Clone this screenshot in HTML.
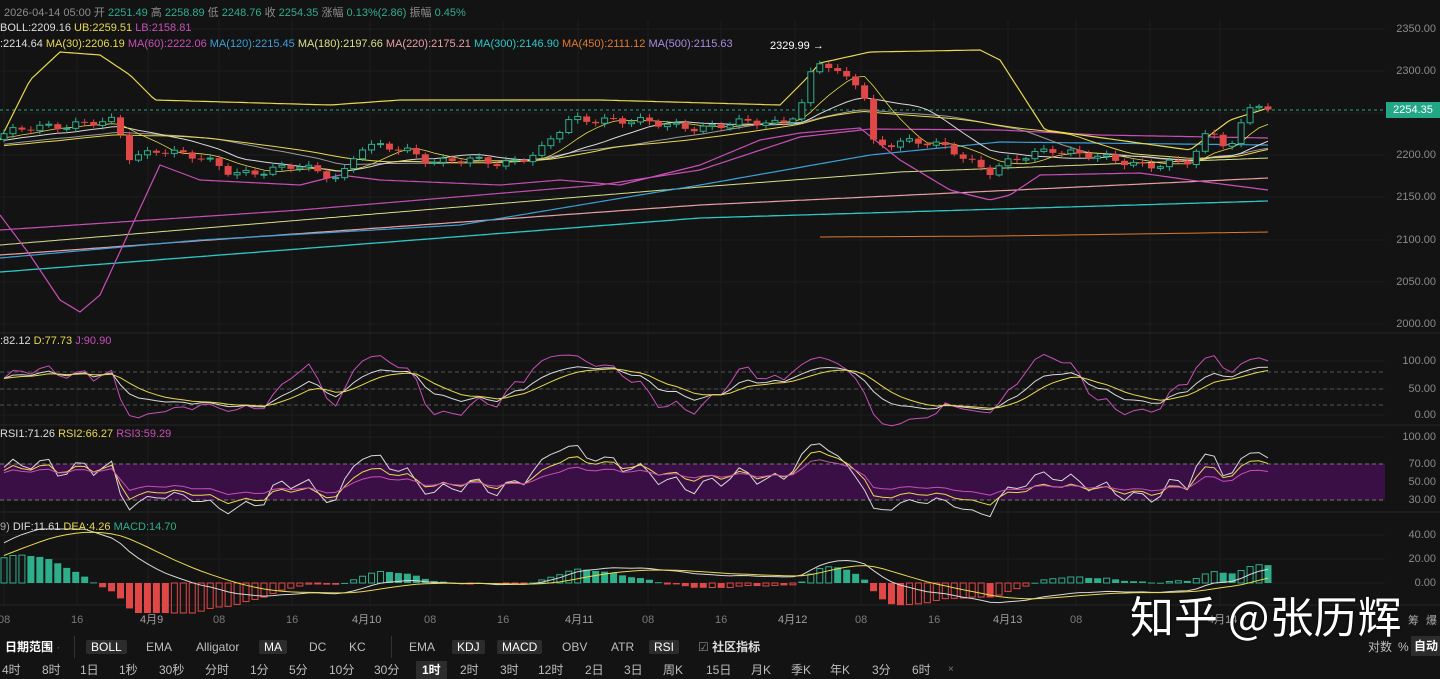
<!DOCTYPE html>
<html><head><meta charset="utf-8">
<style>
*{margin:0;padding:0;box-sizing:border-box}
body{width:1440px;height:679px;background:#131313;overflow:hidden;font-family:"Liberation Sans","Noto Sans CJK SC",sans-serif;color:#ccc;position:relative}
.t{position:absolute;font-size:11px;white-space:nowrap;line-height:13px}
.ax{position:absolute;font-size:11px;color:#8a8a8a;right:4px;text-align:right;line-height:12px}
.tb{position:absolute;font-size:12px;color:#bdbdbd;white-space:nowrap;line-height:18px}
.chip{background:#2c2c2c;color:#fff;border-radius:2px;padding:0 5px}
svg{position:absolute;left:0;top:0}
</style></head><body>
<svg id="s" width="1440" height="679"></svg>

<div class="t" style="left:4px;top:7px;color:#8d8d8d">2026-04-14 05:00 开 <span style="color:#2fae8c">2251.49</span> 高 <span style="color:#2fae8c">2258.89</span> 低 <span style="color:#2fae8c">2248.76</span> 收 <span style="color:#2fae8c">2254.35</span> 涨幅 <span style="color:#2fae8c">0.13%(2.86)</span> 振幅 <span style="color:#2fae8c">0.45%</span></div>
<div class="t" style="left:0;top:22px;color:#ddd">BOLL:2209.16 <span style="color:#e9d94f">UB:2259.51</span> <span style="color:#c84fb8">LB:2158.81</span></div>
<div class="t" style="left:0;top:38px;color:#ddd">:2214.64 <span style="color:#e9d94f">MA(30):2206.19</span> <span style="color:#c84fb8">MA(60):2222.06</span> <span style="color:#3d9fd6">MA(120):2215.45</span> <span style="color:#d9e08a">MA(180):2197.66</span> <span style="color:#e8a0a6">MA(220):2175.21</span> <span style="color:#2cc8c8">MA(300):2146.90</span> <span style="color:#e07a30">MA(450):2111.12</span> <span style="color:#a58ce0">MA(500):2115.63</span></div>
<div class="t" style="left:770px;top:40px;color:#fff">2329.99 →</div>

<div class="t" style="left:0;top:335px;color:#ddd">:82.12 <span style="color:#e9d94f">D:77.73</span> <span style="color:#c84fb8">J:90.90</span></div>
<div class="t" style="left:0;top:428px;color:#ddd">RSI1:71.26 <span style="color:#e9d94f">RSI2:66.27</span> <span style="color:#c84fb8">RSI3:59.29</span></div>
<div class="t" style="left:0;top:521px;color:#aaa">9) <span style="color:#ddd">DIF:11.61</span> <span style="color:#e9d94f">DEA:4.26</span> <span style="color:#2fae8c">MACD:14.70</span></div>

<div class="ax" style="top:23px">2350.00</div><div class="ax" style="top:65px">2300.00</div>
<div class="ax" style="top:149px">2200.00</div><div class="ax" style="top:191px">2150.00</div>
<div class="ax" style="top:234px">2100.00</div><div class="ax" style="top:276px">2050.00</div>
<div class="ax" style="top:318px">2000.00</div>
<div style="position:absolute;left:1386px;top:102px;width:54px;height:16px;background:#23a887;color:#fff;font-size:11px;line-height:16px;text-align:center">2254.35</div>
<div class="ax" style="top:355px">100.00</div><div class="ax" style="top:383px">50.00</div><div class="ax" style="top:409px">0.00</div>
<div class="ax" style="top:431px">100.00</div><div class="ax" style="top:458px">70.00</div><div class="ax" style="top:476px">50.00</div><div class="ax" style="top:494px">30.00</div>
<div class="ax" style="top:529px">40.00</div><div class="ax" style="top:553px">20.00</div><div class="ax" style="top:577px">0.00</div>

<div id="tl"></div>
<div class="t" style="left:1408px;top:615px;color:#aaa">筹</div><div class="t" style="left:1426px;top:615px;color:#aaa">爆</div>
<div style="position:absolute;left:1130px;top:588px;font-size:44px;color:#fff;line-height:52px;font-family:'Noto Sans CJK SC',sans-serif;white-space:nowrap;text-shadow:0 0 2px #000">知乎 @张历辉</div>

<div class="tb" style="left:5px;top:638px;color:#fff;font-weight:bold">日期范围 <span style="color:#666;font-weight:normal">·</span></div>
<div style="position:absolute;left:74px;top:636px;width:1px;height:22px;background:#333"></div>
<div style="position:absolute;left:391px;top:636px;width:1px;height:22px;background:#333"></div>
<div class="tb" style="left:86px;top:638px"><span class="chip">BOLL</span></div>
<div class="tb" style="left:146px;top:638px">EMA</div>
<div class="tb" style="left:196px;top:638px">Alligator</div>
<div class="tb" style="left:259px;top:638px"><span class="chip">MA</span></div>
<div class="tb" style="left:309px;top:638px">DC</div>
<div class="tb" style="left:349px;top:638px">KC</div>
<div class="tb" style="left:409px;top:638px">EMA</div>
<div class="tb" style="left:452px;top:638px"><span class="chip">KDJ</span></div>
<div class="tb" style="left:497px;top:638px"><span class="chip">MACD</span></div>
<div class="tb" style="left:562px;top:638px">OBV</div>
<div class="tb" style="left:611px;top:638px">ATR</div>
<div class="tb" style="left:649px;top:638px"><span class="chip">RSI</span></div>
<div class="tb" style="left:698px;top:638px;color:#ddd"><span style="color:#888">☑</span> <b>社区指标</b></div>
<div class="tb" style="left:1368px;top:638px">对数</div>
<div class="tb" style="left:1398px;top:638px">%</div>
<div class="tb" style="left:1411px;top:636px;background:#2c2c2c;color:#fff;padding:1px 3px;font-weight:bold">自动</div>

<div id="row2"></div>

<script>
const S=document.getElementById('s');let svg='';
const vx=[4,77,148,219,292,370,430,503,578,648,721,795,861,934,1008,1076,1150,1220];
vx.forEach(x=>svg+=`<line x1="${x}" y1="20" x2="${x}" y2="605" stroke="#1e1e1e"/>`);
[29,71,113,155,197,240,282,324,361,389,415,437,464,482,500,535,559,583].forEach(y=>svg+=`<line x1="0" y1="${y}" x2="1385" y2="${y}" stroke="#1c1c1c"/>`);
[333,425,512,605].forEach(y=>svg+=`<line x1="0" y1="${y}" x2="1440" y2="${y}" stroke="#262626"/>`);
svg+=`<rect x="0" y="464" width="1385" height="36" fill="#3a0f45"/>`;
[372,389,405].forEach(y=>svg+=`<line x1="0" y1="${y}" x2="1385" y2="${y}" stroke="#555" stroke-dasharray="4,3"/>`);
[464,500].forEach(y=>svg+=`<line x1="0" y1="${y}" x2="1385" y2="${y}" stroke="#777" stroke-dasharray="4,3"/>`);
svg+=`<line x1="0" y1="110" x2="1385" y2="110" stroke="#23a887" stroke-dasharray="3,3"/>`;
function interp(k,x){if(x<=k[0][0])return k[0][1];for(let i=0;i<k.length-1;i++){if(x<=k[i+1][0]){const a=k[i],b=k[i+1];return a[1]+(b[1]-a[1])*(x-a[0])/(b[0]-a[0]);}}return k[k.length-1][1];}
const py=p=>29+(2350-p)*0.842;
function line(k,c,w){let pts=[];for(let x=k[0][0];x<=k[k.length-1][0];x+=4)pts.push(x+','+interp(k,x).toFixed(1));svg+=`<polyline points="${pts.join(' ')}" fill="none" stroke="${c}" stroke-width="${w||1}"/>`;}
line([[0,272],[700,218],[1268,201]],'#2cc8c8',1.3);
line([[0,255],[700,205],[1268,178]],'#e8a0a6',1.2);
line([[0,245],[700,187],[900,172],[1268,158]],'#d9e08a',1);
line([[0,258],[200,240],[460,225],[700,185],[870,155],[1000,142],[1268,145]],'#3d9fd6',1.2);
line([[820,237],[1000,236],[1268,232]],'#e07a30',1);
line([[0,230],[300,210],[600,185],[700,170],[800,137],[870,129],[1000,130],[1100,135],[1268,138]],'#c84fb8',1.2);
line([[0,140],[30,80],[60,52],[100,55],[130,75],[155,100],[330,105],[400,100],[600,100],[780,105],[805,80],[820,63],[870,52],[980,50],[1000,60],[1045,130],[1190,150],[1230,120],[1268,108]],'#e9d94f',1.2);
line([[0,215],[30,255],[60,300],[80,312],[100,295],[130,230],[160,165],[200,180],[300,185],[340,175],[380,180],[500,185],[560,180],[620,185],[700,165],[760,140],[800,133],[860,128],[900,160],[950,190],[990,200],[1010,195],[1040,175],[1140,173],[1190,180],[1268,190]],'#c84fb8',1.2);
const kf=[[-700,2180],[-250,2200],[-80,2215],[0,2225],[30,2230],[80,2240],[115,2238],[130,2195],[160,2210],[200,2195],[230,2180],[300,2185],[340,2175],[360,2210],[410,2205],[430,2195],[500,2190],[540,2205],[570,2240],[610,2245],[660,2235],[720,2235],[780,2240],[800,2255],[812,2300],[822,2312],[835,2295],[862,2285],[874,2215],[900,2215],[950,2210],[990,2180],[1020,2195],[1050,2210],[1100,2195],[1150,2190],[1190,2190],[1210,2230],[1230,2210],[1252,2265],[1268,2254]];
const N=142,dx=1264/141,pre=80;const C=[],X=[];
for(let i=-pre;i<N;i++){const x=4+i*dx;X.push(x);C.push(interp(kf,x)+4*Math.sin(i*1.7)+3*Math.sin(i*0.63));}
C[C.length-1]=2254.35;
const sma=(a,n)=>a.map((v,i)=>{let s=0,c=0;for(let j=Math.max(0,i-n+1);j<=i;j++){s+=a[j];c++;}return s/c;});
function pl(vals,f,c,w){let p=[];for(let i=pre;i<vals.length;i++)p.push(X[i].toFixed(1)+','+f(vals[i]).toFixed(1));svg+=`<polyline points="${p.join(' ')}" fill="none" stroke="${c}" stroke-width="${w||1}"/>`;}
pl(sma(C,25),py,'#9a9a9a');pl(sma(C,14),py,'#d8d8d8');pl(sma(C,30),py,'#e9d94f');pl(sma(C,7),py,'#e9d94f',0.8);
for(let i=pre;i<C.length;i++){const x=X[i],o=C[i-1],c=C[i];const h=Math.max(o,c)+2+3*Math.abs(Math.sin(i*2.3)),l=Math.min(o,c)-2-3*Math.abs(Math.cos(i*1.9));
const up=c>=o,col=up?'#2fae8c':'#e04848';
svg+=`<line x1="${x}" y1="${py(h)}" x2="${x}" y2="${py(l)}" stroke="${col}"/>`;
const yt=py(Math.max(o,c)),hh=Math.max(1,py(Math.min(o,c))-yt);
svg+=up?`<rect x="${x-3}" y="${yt}" width="6" height="${hh}" fill="#131313" stroke="${col}"/>`:`<rect x="${x-3.5}" y="${yt}" width="7" height="${hh}" fill="${col}"/>`;}
let K=[],D=[],J=[],k=50,d=50;
for(let i=0;i<C.length;i++){const w=C.slice(Math.max(0,i-8),i+1);const hi=Math.max(...w)+3,lo=Math.min(...w)-3;const rsv=(C[i]-lo)/(hi-lo)*100;k=2/3*k+rsv/3;d=2/3*d+k/3;K.push(k);D.push(d);J.push(3*k-2*d);}
const ky=v=>415-Math.max(-20,Math.min(125,v))*0.54;
pl(J,ky,'#c84fb8');pl(K,ky,'#d8d8d8');pl(D,ky,'#e9d94f');
function rsi(n){let r=[],ag=0,al=0;for(let i=0;i<C.length;i++){const ch=i?C[i]-C[i-1]:0;ag=(ag*(n-1)+Math.max(ch,0))/n;al=(al*(n-1)+Math.max(-ch,0))/n;r.push(al+ag?100*ag/(ag+al):50);}return r;}
const ry=v=>482-(v-50)*0.9;
pl(rsi(6),ry,'#d8d8d8');pl(rsi(12),ry,'#e9d94f');pl(rsi(24),ry,'#c84fb8');
const ema=(a,n)=>{let e=a[0],r=[];a.forEach(v=>{e=e+(v-e)*2/(n+1);r.push(e)});return r;};
const e1=ema(C,12),e2=ema(C,26);
const dif=e1.map((v,i)=>v-e2[i]+40*Math.exp(-Math.pow((X[i]-60)/95,2)));
const dea=ema(dif,9);
const my=v=>583-Math.max(-25,Math.min(45,v))*1.2;
for(let i=pre;i<C.length;i++){const h=(dif[i]-dea[i])*2,hp=(dif[i-1]-dea[i-1])*2;const x=X[i],y0=583,y1=my(h);const col=h>=0?'#2fae8c':'#e04848';
const yt=Math.min(y0,y1),hh=Math.max(1,Math.abs(y1-y0));
svg+=(h>=0? (Math.abs(h)>=Math.abs(hp)) : (Math.abs(h)<Math.abs(hp)))?`<rect x="${x-3}" y="${yt}" width="6" height="${hh}" fill="none" stroke="${col}"/>`:`<rect x="${x-3.5}" y="${yt}" width="7" height="${hh}" fill="${col}"/>`;}
pl(dif,my,'#d8d8d8');pl(dea,my,'#e9d94f');
S.innerHTML=svg;
const tl=[[4,'08'],[77,'16'],[140,'4月9'],[219,'08'],[292,'16'],[352,'4月10'],[430,'08'],[503,'16'],[565,'4月11'],[648,'08'],[721,'16'],[778,'4月12'],[861,'08'],[934,'16'],[993,'4月13'],[1076,'08'],[1208,'4月14']];
document.getElementById('tl').innerHTML=tl.map(a=>`<div class="t" style="left:${a[0]-(a[1].length<3?6:0)}px;top:614px;color:${a[1].length>2?'#a0a0a0':'#7a7a7a'}">${a[1]}</div>`).join('');
const r2=[[2,'4时'],[42,'8时'],[80,'1日'],[119,'1秒'],[159,'30秒'],[205,'分时'],[250,'1分'],[289,'5分'],[329,'10分'],[374,'30分'],[416,'1时',1],[460,'2时'],[500,'3时'],[538,'12时'],[585,'2日'],[624,'3日'],[663,'周K'],[706,'15日'],[751,'月K'],[791,'季K'],[830,'年K'],[872,'3分'],[912,'6时'],[948,'×']];
document.getElementById('row2').innerHTML=r2.map(a=>`<div class="tb" style="left:${a[0]}px;top:661px;${a[2]?'background:#2c2c2c;color:#fff;padding:0 6px;font-weight:bold':''}${a[1]=='×'?'color:#777;font-size:10px':''}">${a[1]}</div>`).join('');
</script>
</body></html>
